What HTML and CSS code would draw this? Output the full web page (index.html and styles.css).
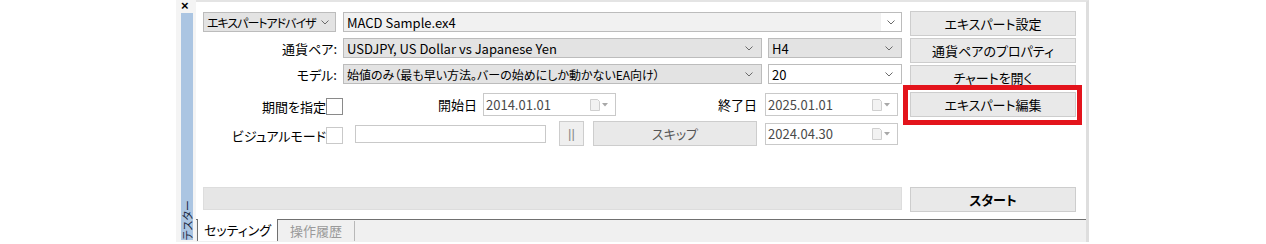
FILE: index.html
```html
<!DOCTYPE html>
<html>
<head>
  <title>テスター</title>
  <link rel="stylesheet" href="styles.css">
</head>
<body>
  <div class="window">
    <div class="sidebar">
      <div class="close">×</div>
      <div class="strip"><span class="strip-title">テスター</span></div>
    </div>
    <div class="panel">
      <div class="panel-body">
        <div class="form">
          <div class="row row-1">
            <div class="select select-type"><span class="type-text">エキスパートアドバイザ</span><svg class="chev" width="8" height="5" viewBox="0 0 8 5"><polyline points="0.5,0.5 4,4 7.5,0.5" fill="none" stroke="#6a6a6a" stroke-width="1"/></svg></div>
            <div class="combo combo-ea"><span>MACD Sample.ex4</span><span class="combo-btn"><svg class="chev" width="8" height="5" viewBox="0 0 8 5"><polyline points="0.5,0.5 4,4 7.5,0.5" fill="none" stroke="#6a6a6a" stroke-width="1"/></svg></span></div>
          </div>
          <div class="row row-2">
            <div class="label label-main">通貨ペア:</div>
            <div class="select select-wide"><span>USDJPY, US Dollar vs Japanese Yen</span><svg class="chev" width="8" height="5" viewBox="0 0 8 5"><polyline points="0.5,0.5 4,4 7.5,0.5" fill="none" stroke="#6a6a6a" stroke-width="1"/></svg></div>
            <div class="select select-small"><span>H4</span><svg class="chev" width="8" height="5" viewBox="0 0 8 5"><polyline points="0.5,0.5 4,4 7.5,0.5" fill="none" stroke="#6a6a6a" stroke-width="1"/></svg></div>
          </div>
          <div class="row row-3">
            <div class="label label-main">モデル:</div>
            <div class="select select-wide"><span class="model-text">始値のみ（最も早い方法。バーの始めにしか動かないEA向け）</span><svg class="chev" width="8" height="5" viewBox="0 0 8 5"><polyline points="0.5,0.5 4,4 7.5,0.5" fill="none" stroke="#6a6a6a" stroke-width="1"/></svg></div>
            <div class="combo select-small"><span>20</span><svg class="chev" width="8" height="5" viewBox="0 0 8 5"><polyline points="0.5,0.5 4,4 7.5,0.5" fill="none" stroke="#6a6a6a" stroke-width="1"/></svg></div>
          </div>
          <div class="row row-4">
            <div class="label label-check">期間を指定</div>
            <div class="checkbox"></div>
            <div class="label label-from">開始日</div>
            <div class="date"><span>2014.01.01</span><svg class="cal" width="20" height="12" viewBox="0 0 20 12"><path d="M1.5 0.5h7l2 2v9h-9z" fill="#f2f2f2" stroke="#cfcfcf"/><polygon points="13,4 19,4 16,7.5" fill="#a8a8a8"/></svg></div>
            <div class="label label-to">終了日</div>
            <div class="date"><span>2025.01.01</span><svg class="cal" width="20" height="12" viewBox="0 0 20 12"><path d="M1.5 0.5h7l2 2v9h-9z" fill="#f2f2f2" stroke="#cfcfcf"/><polygon points="13,4 19,4 16,7.5" fill="#a8a8a8"/></svg></div>
          </div>
          <div class="row row-5">
            <div class="label label-check">ビジュアルモード</div>
            <div class="checkbox checkbox-off"></div>
            <div class="text-input"></div>
            <div class="btn btn-pause">||</div>
            <div class="btn btn-skip">スキップ</div>
            <div class="date date-skip"><span>2024.04.30</span><svg class="cal" width="20" height="12" viewBox="0 0 20 12"><path d="M1.5 0.5h7l2 2v9h-9z" fill="#f2f2f2" stroke="#cfcfcf"/><polygon points="13,4 19,4 16,7.5" fill="#a8a8a8"/></svg></div>
          </div>
          <div class="progress"></div>
        </div>
        <div class="side">
          <div class="btn side-btn">エキスパート設定</div>
          <div class="btn side-btn">通貨ペアのプロパティ</div>
          <div class="btn side-btn">チャートを開く</div>
          <div class="highlight"><div class="btn side-btn">エキスパート編集</div></div>
          <div class="btn side-btn btn-start">スタート</div>
        </div>
      </div>
      <div class="tabs">
        <div class="tab tab-active">セッティング</div>
        <div class="tab">操作履歴</div>
      </div>
    </div>
  </div>
</body>
</html>
```

FILE: styles.css
```css
body {
  margin: 0;
  background: #ffffff;
  font-family: "Noto Sans CJK JP", "Liberation Sans", sans-serif;
  font-size: 13px;
  font-feature-settings: "palt";
  color: #000000;
}

.window {
  display: flex;
  margin-left: 176px;
  width: 913px;
  height: 242px;
}

/* left docking strip */
.sidebar {
  width: 20px;
  display: flex;
  flex-direction: column;
  background: #f4f4f4;
}

.close {
  height: 13px;
  padding-left: 5px;
  font-size: 13px;
  font-weight: bold;
  line-height: 12px;
  font-family: "Liberation Sans", sans-serif;
}

.strip {
  flex: 1;
  margin: 0 3px 2px 5px;
  background: #abc5e2;
  display: flex;
  align-items: flex-end;
  justify-content: center;
}

.strip-title {
  writing-mode: vertical-rl;
  text-orientation: sideways;
  transform: rotate(180deg);
  font-size: 11px;
  line-height: 12px;
  color: #1d2b45;
  padding-bottom: 2px;
}

/* main panel */
.panel {
  flex: 1;
  display: flex;
  flex-direction: column;
  border-top: 2px solid #e4e4e4;
  border-right: 3px solid #dedede;
}

.panel-body {
  height: 217px;
  display: flex;
  align-items: flex-start;
}

.form {
  margin-left: 7px;
  width: 699px;
  padding-top: 10px;
}

.row {
  display: flex;
  align-items: center;
}

.row-1, .row-2, .row-3 {
  height: 20px;
  margin-bottom: 6px;
}

.row-3 {
  margin-bottom: 9px;
}

.row-4 {
  height: 23px;
  margin-bottom: 5px;
}

.row-5 {
  height: 25px;
  margin-bottom: 41px;
}

.label {
  text-align: right;
  white-space: nowrap;
}

.label-main {
  width: 134px;
  padding-right: 6px;
}

.label-check {
  width: 123px;
  padding-top: 4px;
}

.label-from {
  width: 134px;
  padding-right: 6px;
}

.label-to {
  width: 141px;
  padding-right: 8px;
}

.select, .combo {
  box-sizing: border-box;
  height: 20px;
  display: flex;
  align-items: center;
  justify-content: space-between;
  padding: 0 8px 0 3px;
  border: 1px solid #bcbcbc;
  background: #e3e3e3;
  white-space: nowrap;
}

.combo {
  background: #ffffff;
}

.select-type {
  width: 133px;
  justify-content: flex-start;
  gap: 5px;
  padding-right: 0;
  overflow: hidden;
}

.type-text {
  font-size: 12px;
  letter-spacing: -1px;
}

.model-text {
  font-size: 12px;
}

.combo-ea {
  width: 559px;
  margin-left: 7px;
  padding-right: 0;
  background: #f1f1f1;
}

.combo-btn {
  width: 20px;
  height: 18px;
  background: #ffffff;
  display: flex;
  align-items: center;
  justify-content: center;
}

.select-wide {
  width: 419px;
}

.select-small {
  width: 134px;
  margin-left: 6px;
}

.checkbox {
  box-sizing: border-box;
  width: 17px;
  height: 17px;
  margin-top: 4px;
  border: 1px solid #8a8a8a;
  background: #ffffff;
}

.checkbox-off {
  border-color: #c9c9c9;
}

.date {
  box-sizing: border-box;
  width: 133px;
  height: 23px;
  display: flex;
  align-items: center;
  justify-content: space-between;
  padding: 0 6px 0 2px;
  border: 1px solid #c9c9c9;
  background: #ffffff;
  color: #4a4a4a;
}

.date-skip {
  height: 22px;
  margin-left: 8px;
}

.text-input {
  box-sizing: border-box;
  width: 191px;
  height: 18px;
  margin-left: 12px;
  border: 1px solid #c9c9c9;
  background: #ffffff;
}

.btn {
  box-sizing: border-box;
  height: 25px;
  display: flex;
  align-items: center;
  justify-content: center;
  border: 1px solid #cdcdcd;
  background: #e9e9e9;
  white-space: nowrap;
}

.btn-pause {
  width: 25px;
  margin-left: 13px;
  color: #8a8a8a;
  background: #efefef;
  font-family: "Liberation Sans", sans-serif;
}

.btn-skip {
  width: 164px;
  margin-left: 9px;
  color: #555555;
}

.progress {
  box-sizing: border-box;
  height: 23px;
  border: 1px solid #dddddd;
  background: #e6e6e6;
}

.side {
  margin-left: 8px;
  width: 166px;
  padding-top: 9px;
  display: flex;
  flex-direction: column;
  gap: 2px;
}

.highlight {
  position: relative;
}

.highlight::after {
  content: "";
  position: absolute;
  top: -7px;
  left: -7px;
  right: -6px;
  bottom: -8px;
  border: 5px solid #e3141c;
}

.btn-start {
  margin-top: 68px;
  font-weight: bold;
}

/* bottom tabs */
.tabs {
  flex: 1;
  display: flex;
  border-top: 1px solid #707070;
  background: #f0f0f0;
}

.tab {
  width: 76px;
  height: 20px;
  line-height: 20px;
  text-align: center;
  color: #9a9a9a;
  border-right: 1px solid #b8b8b8;
  margin-top: 1px;
}

.tab-active {
  margin-left: 1px;
  width: 79px;
  height: 22px;
  margin-top: -1px;
  line-height: 22px;
  background: #ffffff;
  color: #000000;
  border-left: 1px solid #707070;
  border-right: 1px solid #707070;
}
```
